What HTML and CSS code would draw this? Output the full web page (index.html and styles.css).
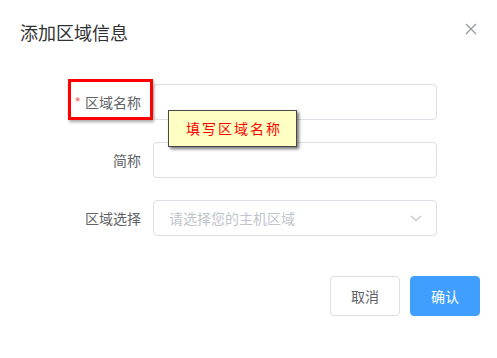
FILE: index.html
```html
<!DOCTYPE html>
<html lang="zh">
<head>
<meta charset="utf-8">
<link rel="stylesheet" href="styles.css">
</head>
<body>
<div class="dialog">
  <div class="header">
    <span class="title">添加区域信息</span>
    <svg class="close" width="12" height="12" viewBox="0 0 12 12"><path d="M1 1L11 11M11 1L1 11" stroke="#909399" stroke-width="1.1" fill="none"/></svg>
  </div>
  <div class="body">
    <div class="form-item">
      <label class="label"><span class="star">*</span>区域名称</label>
      <div class="input"></div>
    </div>
    <div class="form-item">
      <label class="label">简称</label>
      <div class="input"></div>
    </div>
    <div class="form-item">
      <label class="label">区域选择</label>
      <div class="input select">
        <span class="placeholder">请选择您的主机区域</span>
        <svg class="arrow" width="12" height="7" viewBox="0 0 12 7"><path d="M1 1L6 5.5L11 1" stroke="#c0c4cc" stroke-width="1.1" fill="none"/></svg>
      </div>
    </div>
  </div>
  <div class="footer">
    <button class="btn">取消</button>
    <button class="btn primary">确认</button>
  </div>
  <div class="highlight"></div>
  <div class="tip">填写区域名称</div>
</div>
</body>
</html>
```
FILE: styles.css
```css
html, body {
  margin: 0;
  padding: 0;
  background: #fff;
}
body {
  font-family: "Noto Sans CJK SC", "Liberation Sans", sans-serif;
  -webkit-font-smoothing: antialiased;
}
.dialog {
  position: relative;
  width: 497px;
  height: 358px;
  background: #fff;
  box-sizing: border-box;
}
.header {
  display: flex;
  justify-content: space-between;
  align-items: flex-start;
  padding: 20px 20px 10px 20px;
}
.title {
  font-size: 18px;
  line-height: 24px;
  color: #303133;
}
.close {
  margin-top: 3px;
  margin-right: 0;
}
.body {
  padding: 30px 60px 30px 20px;
  display: flex;
  flex-direction: column;
  gap: 22px;
}
.form-item {
  display: flex;
  align-items: center;
  height: 36px;
}
.label {
  width: 133px;
  box-sizing: border-box;
  padding-right: 12px;
  text-align: right;
  font-size: 14px;
  color: #606266;
  line-height: 36px;
}
.star {
  color: #f56c6c;
  margin-right: 4px;
}
.input {
  flex: 1;
  height: 36px;
  box-sizing: border-box;
  border: 1px solid #dcdfe6;
  border-radius: 4px;
  background: #fff;
}
.select {
  display: flex;
  align-items: center;
  justify-content: space-between;
  padding: 0 14px 0 15px;
}
.placeholder {
  font-size: 14px;
  color: #c0c4cc;
}
.arrow {
  margin-top: 1px;
}
.footer {
  display: flex;
  justify-content: flex-end;
  gap: 10px;
  padding: 10px 17px 20px 20px;
}
.btn {
  width: 70px;
  height: 40px;
  box-sizing: border-box;
  border: 1px solid #dcdfe6;
  border-radius: 4px;
  background: #fff;
  color: #606266;
  font-family: inherit;
  font-size: 14px;
  padding: 0;
}
.btn.primary {
  background: #409eff;
  border-color: #409eff;
  color: #fff;
}
.highlight {
  position: absolute;
  left: 68px;
  top: 79px;
  width: 85px;
  height: 41px;
  box-sizing: border-box;
  border: 3px solid #ff0000;
  box-shadow: 1px 2px 3px rgba(0,0,0,0.35);
}
.tip {
  position: absolute;
  left: 168px;
  top: 110px;
  width: 129px;
  height: 37px;
  box-sizing: border-box;
  background: #ffffc4;
  border: 1px solid #4a4a4a;
  box-shadow: 2px 2px 3px rgba(0,0,0,0.55);
  color: #ff0000;
  font-size: 14px;
  letter-spacing: 2px;
  line-height: 35px;
  padding-left: 17px;
}
```
